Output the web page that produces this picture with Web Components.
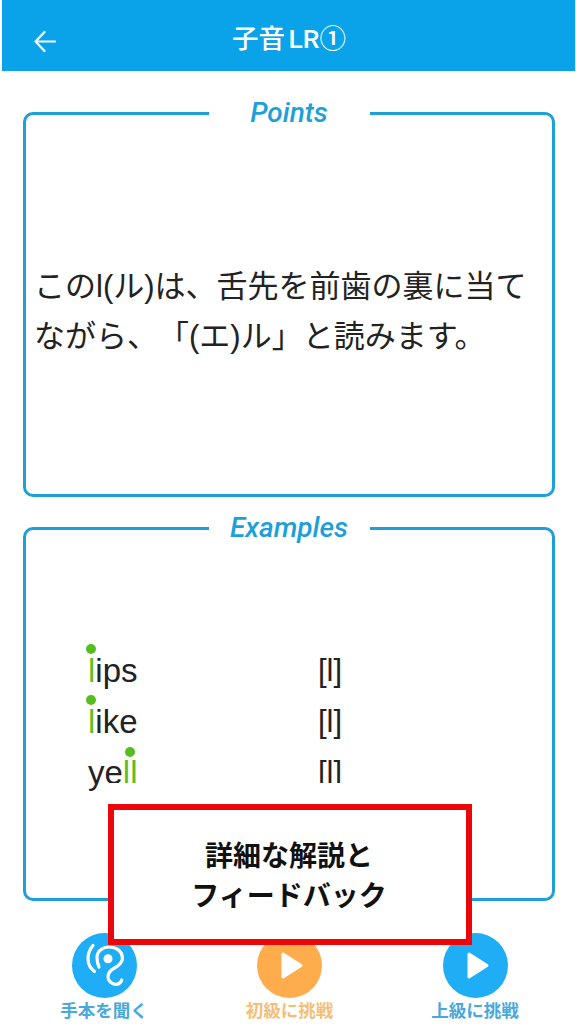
<!DOCTYPE html>
<html lang="ja"><head><meta charset="utf-8">
<style>
html,body{margin:0;padding:0;background:#fff}
body{width:576px;height:1024px;overflow:hidden;position:relative;font-family:"Liberation Sans","Noto Sans CJK JP",sans-serif}
</style></head><body>
<lesson-screen>
  <app-header title-text="子音 LR①"></app-header>
  <titled-card legend="Points" style="--card-h:384px;--card-mt:42px">
    <p-text>このl(ル)は、舌先を前歯の裏に当てながら、「(エ)ル」と読みます。</p-text>
  </titled-card>
  <titled-card legend="Examples" style="--card-h:373px;--card-mt:31px">
    <example-list>
      <example-row ipa="[l]"><mark-l>l</mark-l>ips</example-row>
      <example-row ipa="[l]"><mark-l>l</mark-l>ike</example-row>
      <example-row ipa="[l]">ye<mark-l double>ll</mark-l></example-row>
    </example-list>
  </titled-card>
  <action-bar>
    <action-button label="手本を聞く" kind="ear"></action-button>
    <action-button label="初級に挑戦" kind="play" color="#FFAD4C" text="#F3BF78"></action-button>
    <action-button label="上級に挑戦" kind="play"></action-button>
  </action-bar>
  <call-out>詳細な解説と<br>フィードバック</call-out>
</lesson-screen>
<script>
function def(name, css, html){
  customElements.define(name, class extends HTMLElement{
    connectedCallback(){
      if(this.shadowRoot) return;
      const r=this.attachShadow({mode:"open"});
      r.innerHTML="<style>"+css+"</style>"+(typeof html==="function"?html(this):html);
    }
  });
}
const JP='"Noto Sans CJK JP",sans-serif';
def("lesson-screen",":host{display:flex;flex-direction:column;width:576px;height:1024px}","<slot></slot>");
def("app-header",
  `:host{display:flex;align-items:center;height:71px;margin:0 1.5px;background:#0AA2E8;color:#fff;position:relative;flex:none;justify-content:center}
   .t{font:500 26.500px/1 Roboto,${JP};padding:8px 0 0 2px;word-spacing:-3px;white-space:pre}
   svg{position:absolute;left:31px;top:30px}`,
  h=>`<svg width="24" height="24" viewBox="0 0 24 24" fill="none" stroke="#fff" stroke-width="2.2" stroke-linecap="round" stroke-linejoin="round"><path d="M22 11.500H3M11.500 2 2.500 11.500 11.500 21"/></svg><span class="t">${h.getAttribute("title-text")}</span>`);
def("titled-card",
  `:host{display:block;margin:var(--card-mt) 21px 0 23px;flex:none}
   fieldset{box-sizing:border-box;height:calc(var(--card-h) + 15px);margin:-15px 0 0;padding:0;border:3px solid #1D9FD8;border-radius:10px;display:flex;flex-direction:column;justify-content:center;min-inline-size:0}
   legend{box-sizing:border-box;width:161px;margin:0 auto;padding:0;text-align:center;font:italic 500 28px/30px Roboto,${JP};color:#1D9FD8}`,
  h=>`<fieldset><legend>${h.getAttribute("legend")}</legend><slot></slot></fieldset>`);
def("p-text",
  `:host{display:block;padding:0 8px 0 8px;margin-top:1px;font:400 31px/50px "Liberation Sans",${JP};color:#222;text-spacing-trim:space-all}`,
  "<slot></slot>");
def("example-list",
  `:host{display:flex;flex-direction:column;padding:0 0 0 62px;margin-top:2px}`,"<slot></slot>");
def("example-row",
  `:host{display:grid;grid-template-columns:230px auto;height:51px;align-items:center;font:400 33px/51px "Liberation Sans",sans-serif;color:#222}
   .i{font-size:31px}`,
  h=>`<div><slot></slot></div><div class="i">${h.getAttribute("ipa")}</div>`);
def("mark-l",
  `:host{display:inline-block;position:relative;color:#5FBE28}
   i{position:absolute;left:-2px;top:-1px;width:10px;height:10px;border-radius:50%;background:#55BE1E}
   :host([double]) i{left:2px;top:0}`,
  "<i></i><slot></slot>");
def("action-bar",
  `:host{display:flex;justify-content:space-between;padding:0 57px 0 60px;margin-top:32px;flex:none}`,"<slot></slot>");
def("action-button",
  `:host{display:flex;flex-direction:column;align-items:center;width:88px;font:700 17.500px/1 ${JP};color:var(--t)}
   .c{width:65px;height:65px;border-radius:50%;background:var(--c);display:flex;align-items:center;justify-content:center}
   span{margin-top:0;white-space:nowrap;line-height:24px}`,
  h=>{
    const c=h.getAttribute("color")||"#1FADF5", t=h.getAttribute("text")||"#48A8DC";
    const ic=h.getAttribute("kind")==="ear"
      ?`<svg width="65" height="65" viewBox="0 0 65 65" fill="none" stroke="#fff" stroke-width="3.200" stroke-linecap="round" stroke-linejoin="round"><path d="M21 12.500C17.500 16.500 16 21 16 25.500s1.800 9.500 6.500 13"/><path d="M27 34C25.500 30.500 25 27.500 25 24.500 25 18 31 14 37.500 14 45 14 50.500 19 50.500 25 50.500 30 46 33 42.500 35 38 37.500 35.500 40 36 44.500 36.500 48 39.500 51.300 43.500 51.300 46.500 51.300 49 49.500 49.700 47"/><circle cx="36" cy="25.700" r="4.500" fill="#fff" stroke="none"/></svg>`
      :`<svg width="65" height="65" viewBox="0 0 65 65"><path d="M26 21 44 32.500 26 44Z" fill="#fff" stroke="#fff" stroke-width="3" stroke-linejoin="round"/></svg>`;
    return `<style>:host{--c:${c};--t:${t}}</style><div class="c">${ic}</div><span>${h.getAttribute("label")}</span>`;
  });
def("call-out",
  `:host{position:absolute;left:108px;top:804px;box-sizing:border-box;width:364px;height:141px;border:6px solid #EC0509;background:#fff;display:flex;align-items:center;justify-content:center;text-align:center;font:700 28px/40px ${JP};color:#111;box-shadow:0 -21px 0 #fff}
   div{margin:-2px 0 0 -2px}`,
  "<div><slot></slot></div>");
</script>
</body></html>
